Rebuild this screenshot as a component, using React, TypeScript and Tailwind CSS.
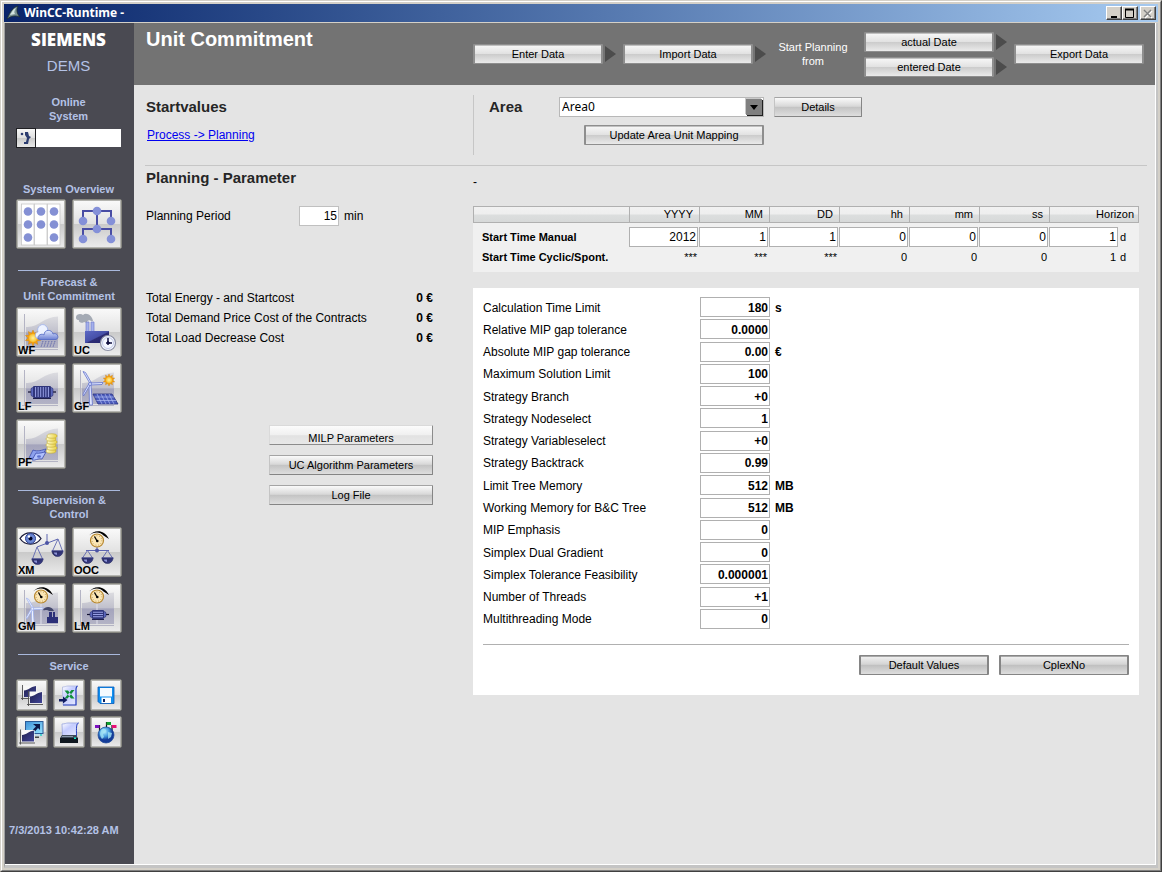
import { useState, type ReactNode } from 'react'
import clsx from 'clsx'

const START_COLUMNS = [
  { unit: 'YYYY', manual: '2012', cyclic: '***' },
  { unit: 'MM', manual: '1', cyclic: '***' },
  { unit: 'DD', manual: '1', cyclic: '***' },
  { unit: 'hh', manual: '0', cyclic: '0' },
  { unit: 'mm', manual: '0', cyclic: '0' },
  { unit: 'ss', manual: '0', cyclic: '0' },
]

const SOLVER_PARAMS = [
  { label: 'Calculation Time Limit', value: '180', unit: 's' },
  { label: 'Relative MIP gap tolerance', value: '0.0000' },
  { label: 'Absolute MIP gap tolerance', value: '0.00', unit: '€' },
  { label: 'Maximum Solution Limit', value: '100' },
  { label: 'Strategy Branch', value: '+0' },
  { label: 'Strategy Nodeselect', value: '1' },
  { label: 'Strategy Variableselect', value: '+0' },
  { label: 'Strategy Backtrack', value: '0.99' },
  { label: 'Limit Tree Memory', value: '512', unit: 'MB' },
  { label: 'Working Memory for B&C Tree', value: '512', unit: 'MB' },
  { label: 'MIP Emphasis', value: '0' },
  { label: 'Simplex Dual Gradient', value: '0' },
  { label: 'Simplex Tolerance Feasibility', value: '0.000001' },
  { label: 'Number of Threads', value: '+1' },
  { label: 'Multithreading Mode', value: '0' },
]

const TOTALS = [
  'Total Energy - and Startcost',
  'Total Demand Price Cost of the Contracts',
  'Total Load Decrease Cost',
]

/* ---------- icon parts ---------- */

function IconDefs() {
  return (
    <svg width="0" height="0" className="absolute" aria-hidden="true">
      <defs>
        <linearGradient id="area" x1="0" y1="0" x2="0" y2="1">
          <stop offset="0" stopColor="#dcdce0" />
          <stop offset="0.48" stopColor="#c0c0cc" />
          <stop offset="0.5" stopColor="#a4a4bc" />
          <stop offset="1" stopColor="#b4b4c6" />
        </linearGradient>
        <linearGradient id="navy" x1="0" y1="0" x2="1" y2="1">
          <stop offset="0" stopColor="#5c68c4" />
          <stop offset="0.5" stopColor="#4650a8" />
          <stop offset="0.55" stopColor="#2c2c74" />
          <stop offset="1" stopColor="#24246a" />
        </linearGradient>
        <linearGradient id="dark" x1="0" y1="0" x2="1" y2="1">
          <stop offset="0" stopColor="#20204c" />
          <stop offset="1" stopColor="#404498" />
        </linearGradient>
        <linearGradient id="paper" x1="0" y1="0" x2="1" y2="1">
          <stop offset="0" stopColor="#ffffff" />
          <stop offset="0.4" stopColor="#c4ccff" />
          <stop offset="1" stopColor="#e8ecff" />
        </linearGradient>
        <linearGradient id="cloud" x1="0" y1="0" x2="0" y2="1">
          <stop offset="0" stopColor="#e4ecff" />
          <stop offset="1" stopColor="#6c80d4" />
        </linearGradient>
        <linearGradient id="coin" x1="0" y1="0" x2="1" y2="0">
          <stop offset="0" stopColor="#fffcd0" />
          <stop offset="1" stopColor="#e8d040" />
        </linearGradient>
        <linearGradient id="screen" x1="0" y1="0" x2="1" y2="1">
          <stop offset="0" stopColor="#3c90d8" />
          <stop offset="1" stopColor="#98e4ff" />
        </linearGradient>
        <radialGradient id="sun">
          <stop offset="0" stopColor="#fff4a0" />
          <stop offset="1" stopColor="#f8c030" />
        </radialGradient>
        <radialGradient id="globe" cx="0.4" cy="0.3">
          <stop offset="0" stopColor="#b4ecff" />
          <stop offset="0.6" stopColor="#4098dc" />
          <stop offset="1" stopColor="#143c98" />
        </radialGradient>
      </defs>
    </svg>
  )
}

function ChartBackdrop() {
  return (
    <g>
      <path d="M10 42V20C22 21 28 9.500 42 9.500V41H10Z" fill="url(#area)" />
      <path d="M8.500 7V43M6 42.500H42" stroke="#b4b4c4" fill="none" />
    </g>
  )
}

function Sun({ x, y, r }: { x: number; y: number; r: number }) {
  const points = Array.from({ length: 20 }, (_, i) => {
    const a = (i * Math.PI) / 10
    const d = i % 2 ? r * 0.62 : r
    return `${x + d * Math.sin(a)},${y - d * Math.cos(a)}`
  }).join(' ')
  return (
    <g>
      <polygon points={points} fill="#f4a010" stroke="#c87c10" strokeWidth="0.4" />
      <circle cx={x} cy={y} r={r * 0.5} fill="url(#sun)" />
    </g>
  )
}

function Bowl({ x, y, top, topX }: { x: number; y: number; top: number; topX: number }) {
  return (
    <g>
      <path d={`M${x - 5} ${y}L${topX} ${top}L${x + 5} ${y}`} fill="none" stroke="#6068b0" strokeWidth="0.9" />
      <path d={`M${x - 5.5} ${y}H${x + 5.5}A5.500 5.500 0 0 1 ${x - 5.5} ${y}Z`} fill="url(#dark)" stroke="#24285c" strokeWidth="0.6" />
      <path d={`M${x - 4} ${y + 1.5}H${x - 0.5}V${y + 4}A4 4 0 0 1 ${x - 4} ${y + 1.5}Z`} fill="#8c94d8" />
      <path d={`M${x - 6} ${y}H${x + 6}`} stroke="#383c8c" />
    </g>
  )
}

function Gauge() {
  return (
    <g>
      <path d="M17 8.500C21 4 31 0.500 37 12L31.500 8.500C28 4 21 5 17 8.500Z" fill="#000" />
      <circle cx="25" cy="13.500" r="6.500" fill="#fbe6b4" stroke="#b88830" strokeWidth="1.200" />
      <circle cx="25" cy="13.500" r="4.800" fill="none" stroke="#907038" strokeWidth="0.8" strokeDasharray="0.700 2" />
      <path d="M25 14L22.500 9.500" stroke="#000" strokeWidth="1.300" />
      <circle cx="25.300" cy="14" r="1.300" fill="#000" />
    </g>
  )
}

function Turbine({ pale }: { pale?: boolean }) {
  return (
    <g fill={pale ? '#f4f8ff' : '#dfe6ff'} stroke={pale ? '#98acf0' : '#6474cc'} strokeWidth="0.8">
      <path d="M17 22L19 22L20.500 42H17.500Z" />
      <path d="M18 20.500L11 8.500L13.500 9.500L19.500 20Z" />
      <path d="M18.500 20L31 19.500L30 21.500L18.500 22Z" />
      <path d="M18.500 21.500L11.500 33L11 31L17 20.500Z" />
      <circle cx="18" cy="21" r="1.500" />
    </g>
  )
}

function Motor({ x, y, w, h, upright }: { x: number; y: number; w: number; h: number; upright?: boolean }) {
  const fins = upright
    ? [1, 2, 3, 4, 5, 6].map((i) => `M${x + (i * w) / 7} ${y + 1}V${y + h - 1}`)
    : [1, 2, 3].map((i) => `M${x + 1} ${y + (i * h) / 4}H${x + w - 1}`)
  return (
    <g>
      <path d={`M${x - 5} ${y + h / 2}H${x + w + 5}`} stroke="#101030" strokeWidth="1.200" />
      <rect x={x - 2} y={y + 1.5} width={w + 4} height={h - 3} rx="2" fill="#5c68bc" stroke="#282c70" strokeWidth="0.6" />
      <rect x={x} y={y} width={w} height={h} rx="1" fill="#30367c" />
      <path d={fins.join('')} stroke="#98a0e4" strokeWidth="1" />
      <path d={`M${x} ${y + h + 0.5}H${x + w}`} stroke="#20204c" />
    </g>
  )
}

function MiniChart({ x, y, w, h }: { x: number; y: number; w: number; h: number }) {
  return (
    <g>
      <rect x={x - 0.5} y={y - 0.5} width={w + 1} height={h + 1} fill="#f8f8f8" />
      <path d={`M${x} ${y + h}V${y + h * 0.4}C${x + w * 0.4} ${y + h * 0.38} ${x + w * 0.5} ${y + 1} ${x + w} ${y}V${y + h}Z`} fill="url(#dark)" />
      <path d={`M${x - 1.5} ${y - 1}V${y + h + 3}M${x - 3} ${y + h + 1.5}H${x + w + 1}`} stroke="#505050" strokeWidth="0.9" fill="none" />
    </g>
  )
}

/* ---------- sidebar icons ---------- */

const columnsIcon = (
  <g>
    {[5.5, 18.5, 31.5].map((x) => (
      <rect key={x} x={x} y="5" width="12.500" height="41" fill="#fff" stroke="#c8c8c8" strokeWidth="0.8" />
    ))}
    {[12, 25, 38].flatMap((x) =>
      [12.5, 25.5, 38.5].map((y) =>
        x === 25 && y === 38.5 ? null : <circle key={`${x}-${y}`} cx={x} cy={y} r="4.300" fill="#8490d4" />,
      ),
    )}
  </g>
)

const treeIcon = (
  <g>
    <path d="M11 22V12H39V22M25 12V30M11 40V30H39V40" fill="none" stroke="#484ca4" strokeWidth="2" />
    {[[25, 12], [11, 22], [39, 22], [25, 30], [11, 40], [39, 40]].map(([x, y]) => (
      <circle key={`${x}-${y}`} cx={x} cy={y} r="4.300" fill="#8490d8" />
    ))}
  </g>
)

const weatherIcon = (
  <g>
    <ChartBackdrop />
    <Sun x={17} y={31} r={8} />
    <path d="M27 34l-2 6M30 34l-2 6M33 34l-2 6M36 34l-2 6M39 34l-2 6" stroke="#5c64a8" strokeWidth="0.9" strokeDasharray="1.500 0.800" />
    <path d="M22 32C18 30 19 25 22 25C20 20 26 15 30 19C32 21 32 23 31 25L34 32Z" fill="#eef3ff" stroke="#9cb0ec" strokeWidth="0.8" />
    <path d="M22 32C21 28 26 26 28 28C28 22 36 22 37 27C41 25 44 31 40 32.500H24Z" fill="url(#cloud)" stroke="#5068c4" strokeWidth="0.8" />
  </g>
)

const plantIcon = (
  <g>
    <path d="M4 10C4 7 9 6 11 8C14 5 20 8 21 14L19 14C18 12 14 14 15 16L12 15C10 17 6 15 7 13C4 13 4 11 4 10Z" fill="#a4aab4" />
    <path d="M14 15H17V25H14ZM19 15H22V25H19Z" fill="#a4b0ec" stroke="#7480cc" strokeWidth="0.7" />
    <rect x="13" y="24" width="24" height="12" fill="url(#navy)" />
    <circle cx="36" cy="36" r="7.500" fill="#f4f7ff" stroke="#8c90a4" strokeWidth="1.200" />
    <circle cx="36" cy="36" r="5.500" fill="none" stroke="#b4bce0" strokeWidth="0.8" />
    <path d="M36 31V36H40" fill="none" stroke="#101040" strokeWidth="1.500" />
    <path d="M34 36h4M36 34v4" stroke="#101040" strokeWidth="1.500" />
  </g>
)

const loadIcon = (
  <g>
    <ChartBackdrop />
    <Motor x={17} y={23} w={18} h={12} upright />
  </g>
)

const generationIcon = (
  <g>
    <ChartBackdrop />
    <Turbine />
    <Sun x={37} y={17} r={6} />
    <path d="M21 31H40L46 41H26Z" fill="#4c5cbc" stroke="#283080" strokeWidth="0.8" />
    <path d="M22.500 34H42M24.500 37.500H44M25 31L30 41M29 31L34 41M33 31L38 41M37 31L42 41" stroke="#b0bcf4" strokeWidth="0.7" />
  </g>
)

const priceIcon = (
  <g>
    <ChartBackdrop />
    {[32, 29, 26, 23, 20, 17].map((y, i) => (
      <ellipse key={y} cx={35 + (i % 2 ? 1 : 0)} cy={y} rx="5" ry="2.200" fill="url(#coin)" stroke="#c0a830" strokeWidth="0.6" />
    ))}
    <path d="M13 39L17 31C22 33 26 31 30 30L26 37C22 36 17 41 13 39Z" fill="#8ca0ec" stroke="#3c4cac" strokeWidth="0.8" />
    <path d="M16 41L20 34C23 35 27 33 30 33L26 40C22 39 19 42 16 41Z" fill="#b0c0fc" stroke="#3c4cac" strokeWidth="0.8" />
    <ellipse cx="23" cy="37.500" rx="2" ry="1.200" fill="#5c70cc" />
  </g>
)

const monitorIcon = (
  <g>
    <path d="M4 11.500C9 4 20 4 25 11.500C20 19 9 19 4 11.500Z" fill="#fff" stroke="#181838" strokeWidth="1.300" />
    <circle cx="14.500" cy="11.500" r="5" fill="#6c88d4" stroke="#2c4090" />
    <circle cx="14.500" cy="11.500" r="2" fill="#000428" />
    <circle cx="13" cy="9.500" r="1.200" fill="#fff" />
    <path d="M31 7V15.500M21 20L42 12" stroke="#5c64b0" strokeWidth="1" />
    <circle cx="31" cy="16" r="2" fill="#4c54a4" />
    <Bowl x={21.5} y={32} topX={21} top={20} />
    <Bowl x={41.5} y={24} topX={42} top={12} />
  </g>
)

const optimizeIcon = (
  <g>
    <path d="M25 19V24M14 23.500H37" stroke="#5c64b0" strokeWidth="1" />
    <circle cx="25" cy="23.500" r="2" fill="#4c54a4" />
    <Bowl x={15.5} y={31} topX={15.5} top={23.5} />
    <Bowl x={35.5} y={31} topX={35.5} top={23.5} />
    <Gauge />
  </g>
)

const generationMgmtIcon = (
  <g>
    <ChartBackdrop />
    <path d="M25 19V42" stroke="#e0e0ec" />
    <g transform="translate(1 8) scale(.85)">
      <Turbine pale />
    </g>
    <path d="M31 34H33V29H36V34H37V29H39V34H42V40H31Z" fill="#2c3078" />
    <path d="M27 27C29 23 36 23 38 28H33C31 26 29 28 27 27Z" fill="#44486c" />
    <Gauge />
  </g>
)

const loadMgmtIcon = (
  <g>
    <ChartBackdrop />
    <path d="M25 19V42" stroke="#e0e0ec" />
    <Motor x={20} y={27} w={12} h={9} />
    <Gauge />
  </g>
)

const chartsIcon = (
  <g>
    <MiniChart x={8} y={7} w={12} h={11} />
    <MiniChart x={14} y={13} w={12} h={11} />
  </g>
)

const excelIcon = (
  <g>
    <path d="M9.500 8C12 8 13 7 15 7H24.500C22 8 23 11 23 13V26H10Z" fill="url(#paper)" stroke="#b0b8e0" strokeWidth="0.8" />
    <path d="M24.500 7C22.500 8 23 11 23 13V26H10" fill="none" stroke="#2840c0" strokeWidth="1.200" />
    <path d="M11.500 11.500H15L21.500 19.500H18ZM21.500 11H18.500L11.500 19.500H14.500Z" fill="#109038" />
    <path d="M6 20H10V17.500L14.500 21L10 24.500V22.500H6Z" fill="#101c60" />
  </g>
)

const saveIcon = (
  <g>
    <path d="M8 8H24V24.500H10L8 22.500Z" fill="#1090f0" stroke="#0858b8" strokeWidth="0.8" />
    <rect x="10" y="9" width="12" height="8.500" fill="#f4faff" />
    <path d="M11.500 24V18.500H21V24Z" fill="#fff" />
    <rect x="13" y="20" width="2" height="3" fill="#0c2060" />
  </g>
)

const displayIcon = (
  <g>
    <rect x="9.500" y="5.500" width="17.500" height="12" fill="url(#screen)" stroke="#2c5c98" />
    <path d="M9 19H27" stroke="#c0d8e8" strokeWidth="2" />
    <circle cx="25" cy="19" r="0.9" fill="#18d0c0" />
    <path d="M19 20.500H23V22H19Z" fill="#404448" />
    <path d="M17 8H24V14L22 12L19 15.500L17 13.500L20 10.500Z" fill="#0c1848" />
    <MiniChart x={6} y={14.5} w={12} h={11} />
  </g>
)

const printerIcon = (
  <g>
    <path d="M9 8C12 8 13 7 15 7H25.500C23 8 23.500 12 23.500 20H9.500Z" fill="url(#paper)" stroke="#98a4e0" strokeWidth="0.8" />
    <path d="M25.500 7C23 8 23.500 12 23.500 20" fill="none" stroke="#2840c0" />
    <path d="M9 19H23L25 22V27H7V22Z" fill="#3c4858" />
    <path d="M7 22H25V27H7Z" fill="#101820" />
    <path d="M9 20.500H20" stroke="#8898a8" />
    <rect x="21" y="21.500" width="2" height="1.500" fill="#10e8d0" />
  </g>
)

const globeIcon = (
  <g>
    <path d="M9.500 9V15M16.500 6V12M22 9V15" stroke="#101010" strokeWidth="1.200" />
    <circle cx="16" cy="19" r="8" fill="url(#globe)" stroke="#1c4898" strokeWidth="0.7" />
    <path d="M12 13C15 12 17 14 16 16L13 18L14 21L12 23C10 20 9 17 12 13ZM18 16L22 17L21 21L18 23Z" fill="#a4e4f4" opacity="0.8" />
    <rect x="5" y="9" width="4.500" height="3" fill="#7c10c0" />
    <rect x="16.500" y="6" width="4.500" height="3" fill="#10a030" />
    <rect x="22" y="9" width="4.500" height="3" fill="#e81078" />
  </g>
)

/* ---------- building blocks ---------- */

const BUTTON_TONES = {
  light: 'border-[#8e8e8e] bg-[linear-gradient(#f8f8f8,#e2e2e2_48%,#cccccc_52%,#eaeaea)] border-x-2 border-y shadow-[inset_0_1px_0_#c0c0c0]',
  dark: 'border-[#858585] bg-[linear-gradient(#f2f2f2,#d4d4d4_46%,#c0c0c0_52%,#dedede)] border-x-2 border-y shadow-[inset_0_1px_0_#a8a8a8]',
  flat: 'border-t-[#a4a4a4] border-r-[#858585] border-b-[#858585] border-l-[#c4c4c4] border bg-[linear-gradient(#fafafa,#d8d8d8_46%,#c4c4c4_52%,#dedede)]',
  faint: 'border-t-[#dadada] border-r-[#8c8c8c] border-b-[#8c8c8c] border-l-[#dadada] border bg-[linear-gradient(#fcfcfc,#f0f0f0_48%,#e2e2e2_54%,#e8e8e8)]',
}

function PushButton({ children, className, tone = 'light' }: { children: ReactNode; className?: string; tone?: keyof typeof BUTTON_TONES }) {
  return (
    <button
      type="button"
      className={clsx('h-5 shrink-0 rounded-[1px] text-[11px] leading-[16px] whitespace-nowrap text-black', BUTTON_TONES[tone], className)}
    >
      {children}
    </button>
  )
}

function StepArrow() {
  return (
    <svg width="11" height="18" viewBox="0 0 11 18" className="ml-0.5 shrink-0" aria-hidden="true">
      <path d="M0 1L11 9L0 17Z" fill="#4c4c4c" />
    </svg>
  )
}

function IconButton({ title, label, small, children }: { title: string; label?: string; small?: boolean; children: ReactNode }) {
  return (
    <button
      type="button"
      aria-label={title}
      className={clsx(
        'relative rounded-[2px] border border-[#85857f] bg-[linear-gradient(#fafafa,#e2e2e2_49%,#cacaca_51%,#ececec)] shadow-[inset_0_0_0_1px_#b4b4b0]',
        small ? 'size-8' : 'size-[50px]',
      )}
    >
      <svg viewBox={small ? '1 1 30 30' : '1 1 48 48'} className="size-full" aria-hidden="true">
        {children}
      </svg>
      {label && <span className="absolute bottom-0 left-px text-[11px] leading-[12px] font-bold text-black">{label}</span>}
    </button>
  )
}

function NavHeading({ children, className }: { children: ReactNode; className?: string }) {
  return (
    <h2
      className={clsx(
        'mr-px ml-0.5 mt-[21px] border-t border-[#a9b8dc] text-center text-[11px] leading-[14px] font-bold whitespace-pre-line',
        className,
      )}
    >
      {children}
    </h2>
  )
}

function Sidebar() {
  return (
    <nav className="flex w-[129px] shrink-0 flex-col bg-[#4a4a52] pr-[13px] pl-[11px] text-[#b4c2e6]">
      <div className="mt-1.5 text-center font-['Open_Sans',sans-serif] text-[17px] leading-[22px] font-extrabold text-white">SIEMENS</div>
      <div className="mt-[5px] text-center text-[15px] leading-[20px]">DEMS</div>
      <div className="mt-[19px] text-center text-[11px] leading-[14px] font-bold">
        <label htmlFor="online">
          Online
          <br />
          System
        </label>
      </div>
      <div className="mt-[5px] flex h-5">
        <button
          type="button"
          aria-label="Log on"
          className="size-5 border border-[#202024] bg-[linear-gradient(#f6f6f6,#e0e0e0_48%,#cacaca_52%,#e8e8e8)]"
        >
          <svg viewBox="0 0 18 18" className="size-full" aria-hidden="true">
            <path d="M8 3H11L12 7L14 8L12 10L11 15H7V13H9L10 9L8 6Z" fill="#2c3c70" />
            <circle cx="5" cy="5" r="1.300" fill="#2c3c70" />
          </svg>
        </button>
        <input id="online" readOnly value="" className="my-px min-w-0 flex-1 bg-white" />
      </div>

      <h2 className="mt-[34px] mb-[3px] text-center text-[11px] leading-[14px] font-bold">System Overview</h2>
      <div className="-mr-px flex gap-1.5">
        <IconButton title="Overview">{columnsIcon}</IconButton>
        <IconButton title="Network">{treeIcon}</IconButton>
      </div>

      <NavHeading className="mb-1 pt-1">{'Forecast &\nUnit Commitment'}</NavHeading>
      <div className="-mr-px flex flex-wrap gap-1.5">
        <IconButton title="Weather forecast" label="WF">{weatherIcon}</IconButton>
        <IconButton title="Unit commitment" label="UC">{plantIcon}</IconButton>
        <IconButton title="Load forecast" label="LF">{loadIcon}</IconButton>
        <IconButton title="Generation forecast" label="GF">{generationIcon}</IconButton>
        <IconButton title="Price forecast" label="PF">{priceIcon}</IconButton>
      </div>

      <NavHeading className="mb-1.5 pt-0.5">{'Supervision &\nControl'}</NavHeading>
      <div className="-mr-px flex flex-wrap gap-1.5">
        <IconButton title="Exchange monitor" label="XM">{monitorIcon}</IconButton>
        <IconButton title="Online optimization" label="OOC">{optimizeIcon}</IconButton>
        <IconButton title="Generation management" label="GM">{generationMgmtIcon}</IconButton>
        <IconButton title="Load management" label="LM">{loadMgmtIcon}</IconButton>
      </div>

      <NavHeading className="mb-1.5 pt-1">Service</NavHeading>
      <div className="-mr-px flex flex-wrap gap-[5px]">
        <IconButton title="Charts" small>{chartsIcon}</IconButton>
        <IconButton title="Excel export" small>{excelIcon}</IconButton>
        <IconButton title="Save" small>{saveIcon}</IconButton>
        <IconButton title="Display" small>{displayIcon}</IconButton>
        <IconButton title="Print" small>{printerIcon}</IconButton>
        <IconButton title="Language" small>{globeIcon}</IconButton>
      </div>

      <time className="-mx-[7px] mt-auto mb-[27px] pt-2 text-[11px] leading-[14px] font-bold whitespace-nowrap">7/3/2013 10:42:28 AM</time>
    </nav>
  )
}

function TitleBar() {
  const control =
    'flex h-3.5 w-4 items-center justify-center border border-t-white border-l-white border-r-[#404040] border-b-[#404040] bg-[#d4d0c8] shadow-[inset_-1px_-1px_0_#808080]'
  return (
    <div className="flex h-[18px] items-center bg-linear-to-r from-[#0a246a] to-[#a6caf0] px-0.5">
      <svg width="16" height="16" viewBox="0 0 16 16" aria-hidden="true">
        <path d="M1 14C3 10 5 3 12 1C10 5 11 9 14 12C9 10 5 11 1 14Z" fill="#7c9494" stroke="#1c2c30" strokeWidth="0.8" />
        <path d="M4 10C6 7 7 4 10 3C8 6 8 8 9 9Z" fill="#d4e4e0" />
      </svg>
      <span className="ml-0.5 font-['Noto_Sans',sans-serif] text-[12px] leading-[18px] font-bold text-white">WinCC-Runtime -</span>
      <div className="ml-auto flex">
        <button type="button" aria-label="Minimize" className={control}>
          <svg width="12" height="11" viewBox="0 0 12 11" aria-hidden="true">
            <path d="M3 8H9V10H3Z" fill="#000" />
          </svg>
        </button>
        <button type="button" aria-label="Maximize" className={control}>
          <svg width="12" height="11" viewBox="0 0 12 11" aria-hidden="true">
            <path d="M1.500 1.500H9.500V9.500H1.500Z" fill="none" stroke="#000" />
            <path d="M1 1.500H10" stroke="#000" strokeWidth="2" />
          </svg>
        </button>
        <button type="button" aria-label="Close" className={clsx(control, 'ml-0.5')}>
          <svg width="12" height="11" viewBox="0 0 12 11" aria-hidden="true">
            <path d="M3 3L10 10M10 3L3 10" stroke="#fff" strokeWidth="1.500" />
            <path d="M2 2L9 9M9 2L2 9" stroke="#808080" strokeWidth="1.500" />
          </svg>
        </button>
      </div>
    </div>
  )
}

function HeaderBar() {
  return (
    <header className="flex h-[62px] bg-[#737373] text-white">
      <h1 className="w-[339px] shrink-0 pt-1 pl-3 text-[20px] leading-[24px] font-bold">Unit Commitment</h1>
      <div className="flex items-center">
        <PushButton className="w-[130px]">Enter Data</PushButton>
        <StepArrow />
        <PushButton className="ml-[7px] w-[130px]">Import Data</PushButton>
        <StepArrow />
        <p className="w-[98px] pr-1 text-center text-[11px] leading-[14px]">
          Start Planning
          <br />
          from
        </p>
        <div className="flex flex-col gap-[5px]">
          <div className="flex items-center">
            <PushButton className="w-[130px]">actual Date</PushButton>
            <StepArrow />
          </div>
          <div className="flex items-center">
            <PushButton className="w-[130px]">entered Date</PushButton>
            <StepArrow />
          </div>
        </div>
        <PushButton className="ml-[7px] w-[130px]">Export Data</PushButton>
      </div>
    </header>
  )
}

function AreaSection() {
  return (
    <section className="mr-2 ml-[11px] flex h-[81px] border-b border-[#c6c6c6]">
      <div className="w-[328px] shrink-0 pt-3 pl-px">
        <h2 className="text-[15px] leading-[20px] font-bold text-[#262626]">Startvalues</h2>
        <a href="#planning" className="mt-2 ml-px inline-block text-[12px] leading-[20px] text-[#0000f0] underline">
          Process -&gt; Planning
        </a>
      </div>
      <div className="my-2.5 border-l border-[#c6c6c6]" />
      <div className="flex pt-3 pl-[15px]">
        <label htmlFor="area" className="w-[70px] text-[15px] leading-[20px] font-bold text-[#262626]">
          Area
        </label>
        <div className="flex w-[205px] flex-col items-end gap-2">
          <div className="relative w-full">
            <select
              id="area"
              className="block h-5 w-full appearance-none border border-[#b8b8b8] bg-white pl-0.5 font-['Noto_Sans',sans-serif] text-[12px] leading-[18px] text-black"
            >
              <option>Area0</option>
            </select>
            <span className="pointer-events-none absolute top-0.5 right-0.5 flex size-4 items-center justify-center bg-[#808080] shadow-[1px_1px_0_#202020,-1px_-1px_0_#c8c8c8]">
              <svg width="8" height="5" viewBox="0 0 8 5" aria-hidden="true">
                <path d="M0 0H8L4 5Z" fill="#000" />
              </svg>
            </span>
          </div>
          <PushButton className="w-[180px]">Update Area Unit Mapping</PushButton>
        </div>
        <PushButton tone="flat" className="ml-2.5 w-[88px]">Details</PushButton>
      </div>
    </section>
  )
}

function PlanningColumn() {
  const [period, setPeriod] = useState('15')
  return (
    <div className="w-[339px] shrink-0 pr-10 pl-3 text-[12px] leading-[20px] text-black">
      <h2 id="planning" className="mt-0.5 text-[15px] leading-[20px] font-bold text-[#262626]">Planning - Parameter</h2>
      <div className="mt-[18px] flex">
        <label htmlFor="period" className="w-[153px]">
          Planning Period
        </label>
        <input
          id="period"
          value={period}
          onChange={(e) => setPeriod(e.target.value)}
          className="h-5 w-10 border border-[#c0c0c0] bg-white pr-px text-right"
        />
        <span className="ml-[5px]">min</span>
      </div>

      <dl className="mt-[62px]">
        {TOTALS.map((label) => (
          <div key={label} className="flex justify-between">
            <dt>{label}</dt>
            <dd className="font-bold">0 €</dd>
          </div>
        ))}
      </dl>

      <div className="mt-[77px] flex flex-col items-end gap-2.5">
        <PushButton tone="faint" className="w-[164px] pt-1">MILP Parameters</PushButton>
        <PushButton tone="flat" className="w-[164px]">UC Algorithm Parameters</PushButton>
        <PushButton tone="flat" className="w-[164px]">Log File</PushButton>
      </div>
    </div>
  )
}

function StartTimeTable() {
  const field = 'h-5 w-[69px] border border-[#b0b0b0] bg-white pr-px text-right'
  return (
    <div className="bg-[#f0f0f0] pb-[5px]">
      <table className="w-full table-fixed border-separate border-spacing-0 text-[12px] leading-[20px] text-black">
        <colgroup>
          <col className="w-[156px]" />
          {START_COLUMNS.map((c) => (
            <col key={c.unit} className="w-[70px]" />
          ))}
          <col />
        </colgroup>
        <thead>
          <tr className="h-[17px] bg-[linear-gradient(#f2f2f2,#eeeeee_48%,#dcdede_52%,#d6d8d8)] text-[11px] leading-[15px]">
            <td className="border border-r-0 border-[#b0b0b0]" />
            {START_COLUMNS.map((c) => (
              <th key={c.unit} scope="col" className="border-y border-l border-[#b0b0b0] pr-1.5 text-right font-normal">
                {c.unit}
              </th>
            ))}
            <th scope="col" className="border border-[#b0b0b0] pr-1 text-right font-normal">
              Horizon
            </th>
          </tr>
        </thead>
        <tbody>
          <tr>
            <th scope="row" className="pt-1 pl-[9px] text-left text-[11px]">
              Start Time Manual
            </th>
            {START_COLUMNS.map((c) => (
              <td key={c.unit} className="pt-1">
                <input aria-label={`Start time ${c.unit}`} defaultValue={c.manual} className={clsx(field, 'block')} />
              </td>
            ))}
            <td className="pt-1">
              <div className="flex gap-0.5">
                <input aria-label="Horizon" defaultValue="1" className={field} />
                <span className="text-[11px]">d</span>
              </div>
            </td>
          </tr>
          <tr>
            <th scope="row" className="pl-[9px] text-left text-[11px]">
              Start Time Cyclic/Spont.
            </th>
            {START_COLUMNS.map((c) => (
              <td key={c.unit} className="pr-0.5 text-right text-[11px]">
                {c.cyclic}
              </td>
            ))}
            <td>
              <div className="flex gap-0.5 text-[11px]">
                <span className="w-[69px] pr-0.5 text-right">1</span>
                <span>d</span>
              </div>
            </td>
          </tr>
        </tbody>
      </table>
    </div>
  )
}

function SolverPanel() {
  return (
    <form className="mt-4 bg-white px-2.5 pt-2 pb-5 text-[12px] text-black">
      <div className="grid min-h-[334px] auto-rows-fr">
        {SOLVER_PARAMS.map((p, i) => (
          <div key={p.label} className="flex items-center">
            <label htmlFor={`param-${i}`} className="w-[217px] pt-px">
              {p.label}
            </label>
            <input
              id={`param-${i}`}
              defaultValue={p.value}
              className="h-5 w-[70px] border border-[#b0b0b0] bg-white pt-px pr-px text-right font-bold"
            />
            <span className="ml-[5px] pt-px font-bold">{p.unit}</span>
          </div>
        ))}
      </div>
      <div className="mt-3.5 flex justify-end gap-2.5 border-t border-[#b0b0b0] pt-2.5">
        <PushButton tone="dark" className="w-[130px]">Default Values</PushButton>
        <PushButton tone="dark" className="w-[130px]">CplexNo</PushButton>
      </div>
    </form>
  )
}

export default function App() {
  return (
    <div className="flex min-h-screen flex-col border border-t-[#d4d0c8] border-r-[#404040] border-b-[#404040] border-l-[#d4d0c8] bg-[#d4d0c8] font-['Liberation_Sans',Arial,sans-serif]">
      <IconDefs />
      <div className="flex flex-1 flex-col border border-t-white border-r-[#808080] border-b-[#808080] border-l-white p-0.5">
        <TitleBar />
        <div className="mt-px flex flex-1 border-r-2 border-b-[3px] border-l border-r-[#c4c4c4] border-b-[#c4c4c4] border-l-[#a0a0a0]">
          <div className="flex min-w-0 flex-1 border-r border-b border-white">
            <Sidebar />
            <main className="min-w-0 flex-1 bg-[#e4e4e4]">
              <HeaderBar />
              <AreaSection />
              <section className="flex">
                <PlanningColumn />
                <div className="mr-4 min-w-0 flex-1 pb-5">
                  <p className="mt-1.5 mb-3.5 text-[12px] leading-[20px] text-black">-</p>
                  <StartTimeTable />
                  <SolverPanel />
                </div>
              </section>
            </main>
          </div>
        </div>
      </div>
    </div>
  )
}
